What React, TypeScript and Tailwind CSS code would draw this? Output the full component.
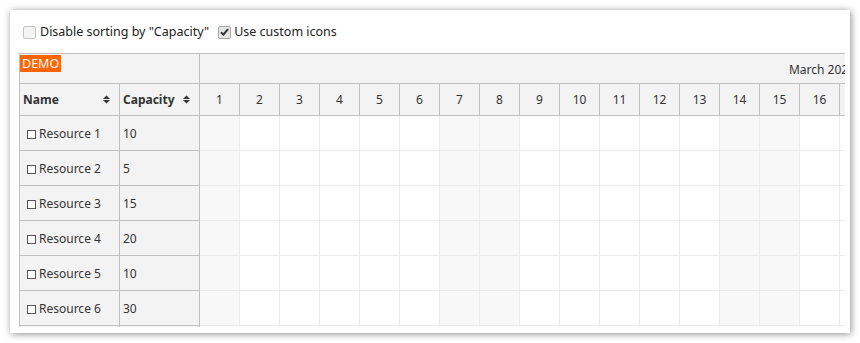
import React from "react";

const resources = [
  { name: "Resource 1", capacity: 10 },
  { name: "Resource 2", capacity: 5 },
  { name: "Resource 3", capacity: 15 },
  { name: "Resource 4", capacity: 20 },
  { name: "Resource 5", capacity: 10 },
  { name: "Resource 6", capacity: 30 },
  { name: "Resource 7", capacity: 20 },
];

const days = Array.from({ length: 17 }, (_, i) => i + 1);
// March 2026: 1st is a Sunday
const isWeekend = (d: number) => d % 7 === 0 || d % 7 === 1;

const SortIcon = () => (
  <svg width="7" height="9" viewBox="0 0 7 9" className="shrink-0">
    <polygon points="0,4 3.5,0.5 7,4" fill="#333" />
    <polygon points="0,5 7,5 3.5,8.5" fill="#333" />
  </svg>
);

const Box = ({ checked }: { checked?: boolean }) => (
  <span
    className={
      "w-[13px] h-[13px] rounded-[2px] border flex items-center justify-center shrink-0 " +
      (checked ? "border-[#a8a8a8] bg-[#e6e6e6]" : "border-[#c4c4c4] bg-[#f4f4f4]")
    }
  >
    {checked && (
      <svg width="9" height="8" viewBox="0 0 9 8">
        <path d="M1 4.2 L3.4 6.6 L8 1.2" stroke="#333" strokeWidth="2" fill="none" />
      </svg>
    )}
  </span>
);

export default function App() {
  return (
    <div className="w-[860px] h-[343px] bg-white pt-[10px] pl-[10px]" style={{ fontFamily: "'Noto Sans', 'Open Sans', sans-serif" }}>
      <div className="w-[840px] h-[323px] bg-white shadow-[1px_1px_7px_rgba(0,0,0,0.45)] overflow-hidden">
        <div className="flex items-center h-[43px] pl-[13px] pt-[1px] text-[12.5px] text-[#222]">
          <Box />
          <span className="ml-[4px]">Disable sorting by "Capacity"</span>
          <span className="ml-[9px]"><Box checked /></span>
          <span className="ml-[3px]">Use custom icons</span>
        </div>

        <div className="ml-[9px] w-[826px] h-[274px] overflow-hidden border-l border-t border-[#c0c0c0] text-[12px] text-[#333]">
          {/* header row 1 */}
          <div className="flex h-[30px] border-b border-[#c0c0c0] bg-[#f3f3f3]">
            <div className="w-[180px] shrink-0 border-r border-[#c0c0c0] pt-[1px]">
              <span className="inline-block bg-[#ff6600] text-white text-[12.5px] leading-[17px] px-[2px]">DEMO</span>
            </div>
            <div className="w-[1244px] shrink-0 flex items-center justify-center pt-[2px]">March 2026</div>
          </div>

          {/* header row 2 */}
          <div className="flex h-[32px] border-b border-[#c0c0c0] bg-[#f3f3f3]">
            <div className="w-[100px] shrink-0 border-r border-[#c0c0c0] flex items-center justify-between pl-[3px] pr-[9px] font-bold">
              <span>Name</span>
              <SortIcon />
            </div>
            <div className="w-[80px] shrink-0 border-r border-[#c0c0c0] flex items-center pl-[3px] gap-[8px] font-bold">
              <span>Capacity</span>
              <SortIcon />
            </div>
            {days.map((d) => (
              <div key={d} className="w-[40px] shrink-0 border-r border-[#c0c0c0] flex items-center justify-center">
                {d}
              </div>
            ))}
          </div>

          {/* rows */}
          {resources.map((r) => (
            <div key={r.name} className="flex h-[35px]">
              <div className="w-[100px] shrink-0 border-r border-b border-[#c0c0c0] bg-[#f3f3f3] flex items-center pl-[7px] pt-[2px] gap-[3px]">
                <span className="w-[9px] h-[9px] border border-[#555] bg-white shrink-0" />
                <span>{r.name}</span>
              </div>
              <div className="w-[80px] shrink-0 border-r border-b border-[#c0c0c0] bg-[#f3f3f3] flex items-center pl-[3px] pt-[2px]">
                {r.capacity}
              </div>
              {days.map((d) => (
                <div
                  key={d}
                  className={
                    "w-[40px] shrink-0 border-r border-b border-[#ebebeb] " +
                    (isWeekend(d) ? "bg-[#f8f8f8]" : "bg-white")
                  }
                />
              ))}
            </div>
          ))}
        </div>
      </div>
    </div>
  );
}
